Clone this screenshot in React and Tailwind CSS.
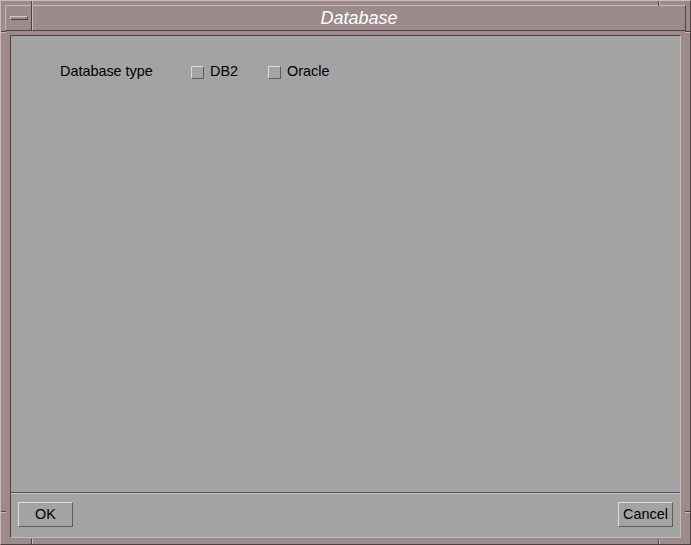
export default function App() {
  const font = { fontFamily: '"Liberation Sans", Arial, sans-serif' }

  return (
    <div
      className="relative w-[691px] h-[545px] bg-[#9c8a8c] border border-t-[#cbb9ba] border-l-[#cbb9ba] border-b-[#4f4042] border-r-[#4f4042] p-[4px] flex flex-col"
      style={font}
    >
      {/* resize handle ticks */}
      <span className="absolute left-[30px] top-0 w-px h-[5px] bg-[#4f4042]" />
      <span className="absolute left-[31px] top-0 w-px h-[5px] bg-[#cbb9ba]" />
      <span className="absolute left-[657px] top-0 w-px h-[5px] bg-[#4f4042]" />
      <span className="absolute left-[658px] top-0 w-px h-[5px] bg-[#cbb9ba]" />
      <span className="absolute left-[30px] bottom-0 w-px h-[5px] bg-[#4f4042]" />
      <span className="absolute left-[31px] bottom-0 w-px h-[5px] bg-[#cbb9ba]" />
      <span className="absolute left-[657px] bottom-0 w-px h-[5px] bg-[#4f4042]" />
      <span className="absolute left-[658px] bottom-0 w-px h-[5px] bg-[#cbb9ba]" />
      <span className="absolute left-0 top-[30px] h-px w-[5px] bg-[#4f4042]" />
      <span className="absolute left-0 top-[31px] h-px w-[5px] bg-[#cbb9ba]" />
      <span className="absolute right-0 top-[30px] h-px w-[5px] bg-[#4f4042]" />
      <span className="absolute right-0 top-[31px] h-px w-[5px] bg-[#cbb9ba]" />
      <span className="absolute left-0 top-[510px] h-px w-[5px] bg-[#4f4042]" />
      <span className="absolute left-0 top-[511px] h-px w-[5px] bg-[#cbb9ba]" />
      <span className="absolute right-0 top-[510px] h-px w-[5px] bg-[#4f4042]" />
      <span className="absolute right-0 top-[511px] h-px w-[5px] bg-[#cbb9ba]" />

      {/* title row */}
      <div className="flex h-[26px]">
        <div className="w-[27px] h-full border border-t-[#cbb9ba] border-l-[#cbb9ba] border-b-[#4f4042] border-r-[#4f4042] flex items-center justify-center">
          <div className="w-[18px] h-[4px] border border-t-[#d6c6c7] border-l-[#d6c6c7] border-b-[#4f4042] border-r-[#4f4042]" />
        </div>
        <div className="flex-1 h-full border border-t-[#cbb9ba] border-l-[#cbb9ba] border-b-[#4f4042] border-r-[#4f4042] flex items-center justify-center">
          <span className="text-white italic text-[18px] leading-none">Database</span>
        </div>
      </div>

      {/* client area */}
      <div className="flex-1 mt-[4px] mb-[2px] mx-[5px] border border-t-[#4f4042] border-l-[#4f4042] border-b-[#cbb9ba] border-r-[#cbb9ba] bg-[#a3a3a3] flex flex-col text-[14.4px] text-black">
        <div className="flex-1 pt-[26px] pl-[49px]">
          <div className="flex items-center h-[20px]">
            <span className="w-[131px]">Database type</span>
            <div className="flex items-center w-[77px]">
              <span className="w-[13px] h-[13px] border border-t-[#dcdcdc] border-l-[#dcdcdc] border-b-[#5c5c5c] border-r-[#5c5c5c] mr-[6px]" />
              <span>DB2</span>
            </div>
            <div className="flex items-center">
              <span className="w-[13px] h-[13px] border border-t-[#dcdcdc] border-l-[#dcdcdc] border-b-[#5c5c5c] border-r-[#5c5c5c] mr-[6px]" />
              <span>Oracle</span>
            </div>
          </div>
        </div>

        <div className="h-px bg-[#4f5060]" />
        <div className="h-px bg-[#c9c9c9]" />

        <div className="h-[43px] flex items-start justify-between px-[7px] pt-[8px]">
          <button className="w-[55px] h-[25px] border border-t-[#dcdcdc] border-l-[#dcdcdc] border-b-[#5c5c5c] border-r-[#5c5c5c] bg-[#a3a3a3] text-[14.4px]">
            OK
          </button>
          <button className="w-[55px] h-[25px] border border-t-[#dcdcdc] border-l-[#dcdcdc] border-b-[#5c5c5c] border-r-[#5c5c5c] bg-[#a3a3a3] text-[14.4px]">
            Cancel
          </button>
        </div>
      </div>
    </div>
  )
}
